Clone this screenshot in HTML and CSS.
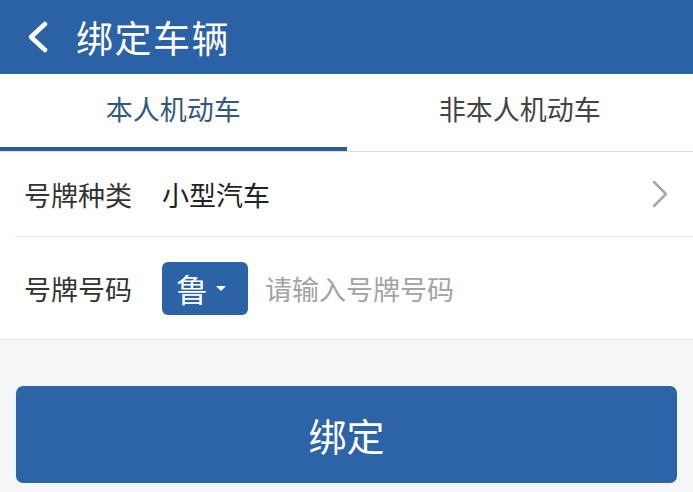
FILE: index.html
```html
<!DOCTYPE html>
<html lang="zh-CN">
<head>
<meta charset="utf-8">
<title>绑定车辆</title>
<link rel="stylesheet" href="styles.css">
</head>
<body>
<div class="page">
  <header class="topbar">
    <svg class="back" width="26" height="32" viewBox="0 0 26 32"><path d="M21 3 L7 16 L21 29" fill="none" stroke="#fff" stroke-width="4.5" stroke-linecap="round" stroke-linejoin="round"/></svg>
    <h1 class="title">绑定车辆</h1>
  </header>
  <nav class="tabs">
    <div class="tab active">本人机动车</div>
    <div class="tab">非本人机动车</div>
  </nav>
  <section class="form">
    <div class="row row-type">
      <span class="label">号牌种类</span>
      <span class="value">小型汽车</span>
      <svg class="arrow" width="18" height="28" viewBox="0 0 18 28"><path d="M3 2 L15 14 L3 26" fill="none" stroke="#a8a8a8" stroke-width="2.5" stroke-linecap="round" stroke-linejoin="round"/></svg>
    </div>
    <div class="row row-num">
      <span class="label">号牌号码</span>
      <div class="prov">
        <span class="prov-char">鲁</span>
        <span class="caret"></span>
      </div>
      <span class="placeholder">请输入号牌号码</span>
    </div>
  </section>
  <div class="actions">
    <button class="bind">绑定</button>
  </div>
</div>
</body>
</html>
```

FILE: styles.css
```css
* { box-sizing: border-box; margin: 0; padding: 0; }
html, body { width: 693px; height: 492px; overflow: hidden; }
body {
  font-family: "Noto Sans CJK SC", "Noto Sans", sans-serif;
  background: #f5f6f8;
}
.page { display: flex; flex-direction: column; }
.topbar {
  height: 74px;
  background: #2b62a6;
  display: flex;
  align-items: center;
  padding-left: 24px;
}
.back { margin-top: 0; }
.title {
  margin-left: 26px;
  color: #fff;
  font-size: 37px;
  font-weight: 400;
  letter-spacing: 1.5px;
  line-height: 1;
}
.tabs {
  display: flex;
  height: 78px;
  background: #fff;
  border-bottom: 1px solid #dcdcdc;
}
.tab {
  flex: 1;
  display: flex;
  align-items: center;
  justify-content: center;
  font-size: 27px;
  color: #444;
  padding-bottom: 4px;
  border-bottom: 4px solid transparent;
}
.tab.active {
  color: #34577e;
  border-bottom-color: #2b5d9c;
}
.form {
  background: #fff;
  border-bottom: 1px solid #e3e5e8;
}
.row {
  display: flex;
  align-items: center;
  margin-left: 15px;
  padding-left: 9px;
  padding-right: 24px;
}
.row-type {
  height: 85px;
  border-bottom: 1px solid #e6e6e6;
}
.row-num { height: 102px; }
.label {
  font-size: 27px;
  color: #333;
  width: 138px;
}
.value {
  flex: 1;
  font-size: 27px;
  color: #222;
}
.prov {
  width: 86px;
  height: 53px;
  background: #2c62a6;
  border-radius: 6px;
  display: flex;
  align-items: center;
  padding-left: 14px;
}
.prov-char {
  color: #fff;
  font-size: 32px;
  line-height: 1;
}
.caret {
  margin-left: 8px;
  width: 0;
  height: 0;
  border-left: 5px solid transparent;
  border-right: 5px solid transparent;
  border-top: 5px solid #fff;
}
.placeholder {
  margin-left: 17px;
  font-size: 27px;
  color: #a3a3a3;
}
.actions {
  padding: 46px 16px 0;
}
.bind {
  width: 100%;
  height: 97px;
  border: none;
  border-radius: 7px;
  background: #2d64a8;
  color: #fff;
  font-family: "Noto Sans CJK SC", sans-serif;
  font-size: 38px;
}
```
